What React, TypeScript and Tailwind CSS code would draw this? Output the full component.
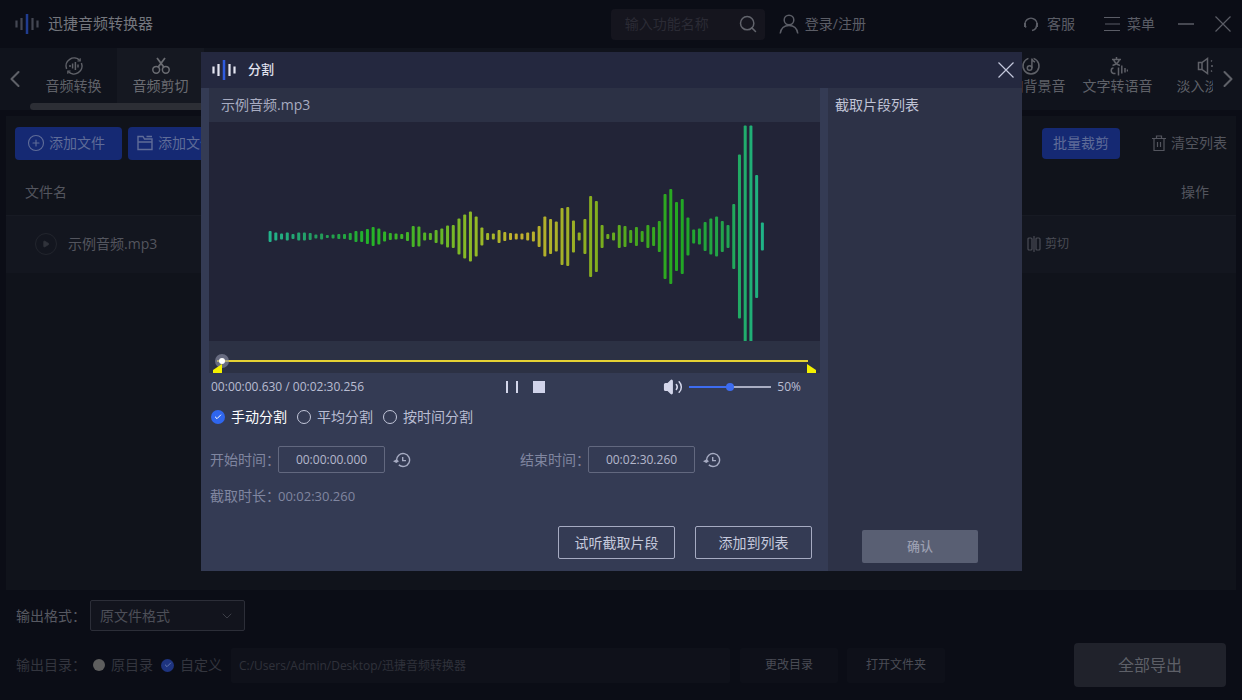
import React, { useState } from 'react';
import { Check, ChevronDown, ChevronLeft, ChevronRight, CirclePlus, Play, Search, Volume2 } from 'lucide-react';
import { clsx, type ClassValue } from 'clsx';
import { twMerge } from 'tailwind-merge';

function cn(...inputs: ClassValue[]) {
  return twMerge(clsx(inputs));
}

// Full heights of the waveform bars, left to right
const PEAKS = [
  11, 8, 6, 8, 5, 8, 8, 7, 4, 6, 3, 4, 5, 5, 7, 11, 11, 15, 19, 16, 10, 7, 6, 5, 9, 21, 20, 8, 7, 13, 16, 22, 23, 36, 44,
  50, 40, 18, 7, 6, 13, 9, 7, 6, 6, 8, 10, 21, 40, 35, 30, 57, 59, 32, 8, 35, 81, 71, 23, 5, 8, 23, 21, 13, 19, 11, 23,
  19, 31, 85, 95, 69, 75, 38, 14, 16, 29, 36, 40, 31, 23, 65, 164, 222, 222, 123, 28,
];

type IconName = 'convert' | 'cut' | 'music' | 'speech' | 'fade';

interface Tab {
  label: string;
  icon: IconName;
}

const TABS: Tab[] = [
  { label: '音频转换', icon: 'convert' },
  { label: '音频剪切', icon: 'cut' },
  { label: '音频合并', icon: 'convert' },
  { label: '音频提取', icon: 'music' },
  { label: '音频压缩', icon: 'convert' },
  { label: '音频变速', icon: 'fade' },
  { label: '音频变声', icon: 'speech' },
  { label: '音频降噪', icon: 'convert' },
  { label: '音频倒放', icon: 'convert' },
  { label: '音量调整', icon: 'fade' },
  { label: '音频录制', icon: 'music' },
  { label: '添加背景音', icon: 'music' },
  { label: '文字转语音', icon: 'speech' },
  { label: '淡入淡出', icon: 'fade' },
];

const ICON_PATHS: Record<IconName, React.ReactNode> = {
  convert: (
    <>
      <path d="M2.6 13A8 8 0 0 1 15.800 4.500M17.400 7A8 8 0 0 1 4.200 15.500" />
      <path d="M16.200 2.200v2.800h-2.800M3.800 17.800V15h2.800" strokeWidth="1.200" />
      <path d="M6 9v2M8.600 7.500v5M11.400 6v8M14 8.500v3" />
    </>
  ),
  cut: (
    <>
      <circle cx="5.200" cy="13.800" r="3.400" />
      <circle cx="14.800" cy="13.800" r="3.400" />
      <path d="M6 2l6.800 9M14 2l-6.800 9" strokeWidth="1.800" />
    </>
  ),
  music: (
    <>
      <path d="M12.6 2.400A8 8 0 1 1 7.400 2.400" />
      <circle cx="8.600" cy="12" r="2.300" />
      <path d="M10.900 12V2.500c.3 2 1.300 3 3.200 3.400" />
    </>
  ),
  speech: (
    <>
      <path d="M4 3.500h9M8.500 1v2.500M11.500 3.500C10.500 6.500 8 8.500 4.500 9.500M5.500 3.500C6.500 6.500 9 8.500 12 9.500" />
      <path d="M5.500 12c-3 0-3 5 0 5.500h2M10.500 11.500v8M13.800 9.500v8M17 12v4.500M19.500 13.500v2" />
    </>
  ),
  fade: (
    <>
      <path d="M12.500 2.500v15L7 13.500H3.500v-7H7z" />
      <path d="M7 6.500v7M16 4.500l1 .8M16 10h2.500M16 15.500l1-.8M19 7.500v1M19 12v1" />
    </>
  ),
};

const TabIcon: React.FC<{ name: IconName }> = ({ name }) => (
  <svg viewBox="0 0 20 20" className="w-5 h-5" fill="none" stroke="currentColor" strokeWidth="1.5">
    {ICON_PATHS[name]}
  </svg>
);

const CloseIcon = () => (
  <svg viewBox="0 0 16 16" className="w-4 h-4" stroke="currentColor" strokeWidth="1.200">
    <path d="M.5.5l15 15M15.500.5l-15 15" />
  </svg>
);

const Logo: React.FC<{ className?: string }> = ({ className }) => (
  <svg viewBox="0 0 26 22" className={cn('w-[26px] h-[22px]', className)} strokeWidth="2.200">
    <path d="M2.500 7.500v7M7.500 5v12M18.500 5v12M23.500 7.500v7" stroke="currentColor" />
    <path d="M13 1v20" stroke="#2f5ce0" strokeWidth="2.500" />
  </svg>
);

const ResetTimeButton: React.FC<{ label: string }> = ({ label }) => (
  <button type="button" aria-label={label} className="text-[#a6abc2]">
    <svg viewBox="0 0 18 16" className="w-[18px] h-4" fill="none" stroke="currentColor" strokeWidth="1.400">
      <path d="M3.600 8.500A6.500 6.500 0 1 1 5.800 12.900" />
      <path d="M0 9.200l3.600-2 2.400 2-2.600 1.800z" fill="currentColor" stroke="none" />
      <path d="M9.700 5v3.600h3.300" />
    </svg>
  </button>
);

const TimeField: React.FC<{ id: string; label: string; value: string }> = ({ id, label, value }) => (
  <div className="flex items-center w-[310px] shrink-0">
    <label htmlFor={id} className="w-[68px] text-sm whitespace-nowrap text-[#8086a0]">
      {label}
    </label>
    <input
      id={id}
      defaultValue={value}
      className="w-[107px] h-[27px] mr-2 text-center text-xs text-[#b4b8cc] bg-transparent border border-[#62687f] rounded-xs outline-none"
    />
    <ResetTimeButton label={`${label}重置`} />
  </div>
);

interface RadioProps {
  name: string;
  label: string;
  checked: boolean;
  onChange: () => void;
  className?: string;
  inputClass?: string;
  checkClass?: string;
}

const Radio: React.FC<RadioProps> = ({ name, label, checked, onChange, className, inputClass, checkClass }) => (
  <label className={cn('flex items-center gap-[6px] text-sm whitespace-nowrap', className)}>
    <span className="grid place-items-center">
      <input
        type="radio"
        name={name}
        checked={checked}
        onChange={onChange}
        className={cn('col-start-1 row-start-1 appearance-none rounded-full', inputClass)}
      />
      {checked && (
        <Check className={cn('col-start-1 row-start-1 w-2 h-2 pointer-events-none', checkClass)} strokeWidth={3} />
      )}
    </span>
    {label}
  </label>
);

const Waveform = () => (
  <svg viewBox="0 0 611 219" className="block w-full h-[219px] bg-[#222437]">
    <defs>
      <linearGradient id="wave" gradientUnits="userSpaceOnUse" x1="60" y1="0" x2="554" y2="0">
        <stop offset="0" stopColor="#22b48c" />
        <stop offset="0.1" stopColor="#239a5c" />
        <stop offset="0.2" stopColor="#22b428" />
        <stop offset="0.3" stopColor="#4ab426" />
        <stop offset="0.42" stopColor="#94ba26" />
        <stop offset="0.5" stopColor="#c4b02c" />
        <stop offset="0.58" stopColor="#acb02a" />
        <stop offset="0.66" stopColor="#84ae1e" />
        <stop offset="0.74" stopColor="#46a81e" />
        <stop offset="0.83" stopColor="#22a822" />
        <stop offset="0.92" stopColor="#22a44c" />
        <stop offset="1" stopColor="#1fb488" />
      </linearGradient>
    </defs>
    {PEAKS.map((h, i) => (
      <rect key={i} x={59.6 + i * 5.724} y={114.5 - h / 2} width="3" height={h} rx="1" fill="url(#wave)" />
    ))}
  </svg>
);

const TitleBar = () => (
  <header className="flex items-center h-12 pl-[14px] pr-[11px] text-sm text-[#5b5d66]">
    <Logo className="text-[#6a6e7c] opacity-60" />
    <h1 className="ml-2 text-[15px] text-[#74767d]">迅捷音频转换器</h1>
    <div className="flex items-center w-[154px] h-[31px] ml-auto pl-[14px] pr-[7px] rounded-sm bg-[#15151e]">
      <input
        aria-label="搜索功能"
        placeholder="输入功能名称"
        className="flex-1 min-w-0 bg-transparent outline-none placeholder:text-[#2b2b35]"
      />
      <button type="button" aria-label="搜索" className="text-[#62646c]">
        <Search className="w-5 h-5" strokeWidth={1.8} />
      </button>
    </div>
    <a href="#login" className="flex items-center gap-[6px] ml-[14px] mr-[157px]">
      <svg viewBox="0 0 20 20" className="w-5 h-5" fill="none" stroke="currentColor" strokeWidth="1.500">
        <circle cx="10" cy="6" r="4.800" />
        <path d="M1.200 19.500C2 14 5.500 11.500 10 11.500s8 2.500 8.800 8" />
      </svg>
      登录/注册
    </a>
    <a href="#support" className="flex items-center gap-2">
      <svg viewBox="0 0 16 16" className="w-4 h-4" fill="none" stroke="currentColor" strokeWidth="1.500">
        <path d="M3 11.500A6 6 0 1 1 13 11.500M13.500 9.500c0 3-2 4.500-4.500 5" />
        <path d="M2 7v4M14 7v4" strokeWidth="2" />
      </svg>
      客服
    </a>
    <button type="button" className="flex items-center gap-[7px] ml-[29px]">
      <svg viewBox="0 0 16 16" className="w-4 h-4" fill="none" stroke="currentColor" strokeWidth="1.200">
        <path d="M0 1.500h16M1 8h15M0 14.500h16" />
      </svg>
      菜单
    </button>
    <button type="button" aria-label="最小化" className="ml-[23px]">
      <svg viewBox="0 0 16 16" className="w-4 h-4" stroke="currentColor" strokeWidth="1.500">
        <path d="M0 8h16" />
      </svg>
    </button>
    <button type="button" aria-label="关闭" className="ml-[21px]">
      <CloseIcon />
    </button>
  </header>
);

const TabStrip = () => (
  <nav className="flex h-[62px] bg-[#10131c] text-[#5f6168]">
    <button type="button" aria-label="向左" className="flex justify-center items-center w-[30px] shrink-0">
      <ChevronLeft className="w-7 h-7" strokeWidth={1.8} />
    </button>
    <div className="flex-1 min-w-0">
      <div className="flex overflow-hidden">
        {TABS.map((tab, i) => (
          <button
            key={tab.label}
            type="button"
            className={cn(
              'flex flex-col items-center w-[87px] h-[55px] pt-2 shrink-0 text-sm leading-5 whitespace-nowrap',
              i === 1 && 'bg-[#151821] text-[#6a6c72]'
            )}
          >
            <TabIcon name={tab.icon} />
            {tab.label}
          </button>
        ))}
      </div>
      <div className="w-2/3 h-[7px] rounded-full bg-[#2c2e35]" />
    </div>
    <button type="button" aria-label="向右" className="flex justify-center items-center w-[29px] shrink-0">
      <ChevronRight className="w-7 h-7" strokeWidth={1.8} />
    </button>
  </nav>
);

const FilePanel = () => (
  <main className="flex-1 mx-[6px] mt-[6px] bg-[#10131b] text-sm text-[#53555e]">
    <div className="flex items-center gap-[6px] h-[54px] px-[9px]">
      <button type="button" className="flex items-center gap-1 w-[107px] h-[33px] pl-3 rounded-sm bg-[#152973] text-[#5f6c98]">
        <CirclePlus className="w-[18px] h-[18px]" strokeWidth={1.5} />
        添加文件
      </button>
      <button type="button" className="flex items-center gap-1 w-[121px] h-[33px] pl-2 rounded-sm bg-[#152973] text-[#5f6c98]">
        <svg viewBox="0 0 18 18" className="w-[18px] h-[18px]" fill="none" stroke="currentColor" strokeWidth="1.400">
          <path d="M2 15.500v-13h5l1.500 2.500h7.500v10.500zM2 8h14M10.500 2.500H16" />
        </svg>
        添加文件夹
      </button>
      <button type="button" className="w-[78px] h-[31px] ml-auto rounded-sm bg-[#152973] text-[#5f6c98]">
        批量裁剪
      </button>
      <button type="button" className="flex items-center gap-1 ml-[25px]">
        <svg viewBox="0 0 16 16" className="w-4 h-4" fill="none" stroke="currentColor" strokeWidth="1.200">
          <path d="M1 3.500h14M5.500 3V1h5v2M3 3.500v12h10v-12M6.500 7v5M9.500 7v5" />
        </svg>
        清空列表
      </button>
    </div>
    <table className="w-full text-left">
      <thead>
        <tr className="h-[45px]">
          <th className="pl-[19px] font-normal">文件名</th>
          <th className="w-[154px]" />
          <th className="w-[55px] font-normal">操作</th>
        </tr>
      </thead>
      <tbody>
        <tr className="h-[58px] border-t border-[#171a23] bg-[#13161f]">
          <td className="pl-[29px]">
            <div className="flex items-center gap-[11px]">
              <button
                type="button"
                aria-label="播放"
                className="flex justify-center items-center w-[22px] h-[22px] rounded-full border border-[#22252d] text-[#30333b]"
              >
                <Play className="w-2 h-2 fill-current" />
              </button>
              示例音频.mp3
            </div>
          </td>
          <td>
            <button type="button" className="flex items-center gap-1 text-xs text-[#4a4c55]">
              <svg viewBox="0 0 14 16" className="w-[14px] h-4" fill="none" stroke="currentColor" strokeWidth="1.200">
                <rect x="1" y="2" width="4" height="12" rx="1" />
                <rect x="9" y="2" width="4" height="12" rx="1" />
                <path d="M7 0v16" />
              </svg>
              剪切
            </button>
          </td>
          <td />
        </tr>
      </tbody>
    </table>
  </main>
);

const OutputBar = () => {
  const [target, setTarget] = useState('custom');

  return (
    <footer className="pt-[10px] pb-[13px] pl-4 pr-4 text-sm text-[#484a53]">
      <div className="flex items-center">
        <label htmlFor="format" className="w-[74px] whitespace-nowrap text-[#575962]">
          输出格式：
        </label>
        <div className="relative">
          <select
            id="format"
            className="appearance-none w-[155px] h-[31px] pl-[9px] pr-8 rounded-xs border border-[#2c2e38] bg-[#12141d] text-[#4d4f58] outline-none"
          >
            <option>原文件格式</option>
          </select>
          <ChevronDown className="absolute right-[10px] top-2 w-4 h-4 pointer-events-none text-[#3c3e47]" strokeWidth={1.5} />
        </div>
      </div>
      <div className="flex items-center h-11 mt-3 text-[#33353e]">
        <span className="w-[77px] whitespace-nowrap">输出目录：</span>
        <Radio
          name="target"
          label="原目录"
          checked={target === 'source'}
          onChange={() => setTarget('source')}
          className="mr-2"
          inputClass="w-3 h-3 bg-[#5e5e5e]"
        />
        <Radio
          name="target"
          label="自定义"
          checked={target === 'custom'}
          onChange={() => setTarget('custom')}
          inputClass="w-[13px] h-[13px] bg-[#5e5e5e] checked:bg-[#1e3480]"
          checkClass="text-[#6478b0]"
        />
        <input
          aria-label="输出路径"
          defaultValue="C:/Users/Admin/Desktop/迅捷音频转换器"
          className="flex-1 min-w-0 h-[35px] ml-[9px] px-2 rounded-xs bg-[#0f111a] text-xs text-[#2f313a] outline-none"
        />
        <button type="button" className="w-[98px] h-[35px] ml-[10px] rounded-xs bg-[#0e1019] text-xs text-[#4a4c55]">
          更改目录
        </button>
        <button type="button" className="w-[98px] h-[35px] ml-[9px] rounded-xs bg-[#0e1019] text-xs text-[#4a4c55]">
          打开文件夹
        </button>
        <button type="button" className="w-[152px] h-11 ml-[129px] rounded-sm bg-[#20222b] text-base text-[#5e6068]">
          全部导出
        </button>
      </div>
    </footer>
  );
};

const MODES = ['手动分割', '平均分割', '按时间分割'];

const SplitDialog = () => {
  const [mode, setMode] = useState(MODES[0]);
  const [volume, setVolume] = useState(50);
  const [position, setPosition] = useState(0.63);

  return (
    <div role="dialog" aria-label="分割" className="w-[821px] bg-[#343b54] text-[#b9bdd2]">
      <div className="flex items-center h-9 pl-[10px] pr-2 bg-[#24283f]">
        <Logo className="text-[#e4e6f2]" />
        <h2 className="ml-[11px] text-[13px] font-medium text-[#e0e2ee]">分割</h2>
        <button type="button" aria-label="关闭" className="ml-auto text-[#c4c8dc]">
          <CloseIcon />
        </button>
      </div>

      <div className="flex">
        <div className="flex-1 min-w-0 px-2">
          <div className="h-[34px] px-3 text-sm leading-[34px] bg-[#2c3145] text-[#a7abc0]">示例音频.mp3</div>
          <Waveform />

          {/* Playback position with the two trim handles */}
          <div className="relative flex items-start h-8 pt-[14px] pl-2 pr-3 bg-[#2c3144]">
            <input
              type="range"
              aria-label="播放进度"
              min={0}
              max={150.26}
              step={0.01}
              value={position}
              onChange={(e) => setPosition(Number(e.target.value))}
              className="w-full h-3 appearance-none bg-transparent [&::-webkit-slider-runnable-track]:h-[2px] [&::-webkit-slider-runnable-track]:bg-[#e6d234] [&::-webkit-slider-thumb]:appearance-none [&::-webkit-slider-thumb]:w-[6px] [&::-webkit-slider-thumb]:h-[6px] [&::-webkit-slider-thumb]:-mt-[2px] [&::-webkit-slider-thumb]:rounded-full [&::-webkit-slider-thumb]:bg-white [&::-webkit-slider-thumb]:ring-4 [&::-webkit-slider-thumb]:ring-[#8f93a8]/60"
            />
            <svg viewBox="0 0 9 9" className="absolute left-1 bottom-0 w-[9px] h-[9px]" fill="#f4f000">
              <path d="M9 0v9H0V6z" />
            </svg>
            <svg viewBox="0 0 9 9" className="absolute right-1 bottom-0 w-[9px] h-[9px]" fill="#f4f000">
              <path d="M0 0v9h9V6z" />
            </svg>
          </div>

          <div className="flex items-center h-7 pl-[2px] pr-[19px] text-xs">
            <span className="w-[295px]">00:00:00.630 / 00:02:30.256</span>
            <button type="button" aria-label="暂停">
              <svg viewBox="0 0 12 12" className="w-3 h-3" stroke="#d3d6ea" strokeWidth="2">
                <path d="M1 0v12M11 0v12" />
              </svg>
            </button>
            <button type="button" aria-label="停止" className="w-3 h-3 ml-[15px] bg-[#d0d3ea]" />
            <Volume2 className="w-5 h-5 ml-auto text-[#d3d6ea] [&>path:first-child]:fill-current" strokeWidth={1.8} />
            <input
              type="range"
              aria-label="音量"
              value={volume}
              onChange={(e) => setVolume(Number(e.target.value))}
              style={{ backgroundImage: `linear-gradient(to right, #3d6cf0 ${volume}%, #a9adc2 ${volume}%)` }}
              className="w-[82px] h-[2px] mx-[6px] appearance-none [&::-webkit-slider-thumb]:appearance-none [&::-webkit-slider-thumb]:w-2 [&::-webkit-slider-thumb]:h-2 [&::-webkit-slider-thumb]:rounded-full [&::-webkit-slider-thumb]:bg-[#3d6cf0]"
            />
            <span>{volume}%</span>
          </div>

          <div className="flex items-center gap-[10px] h-8 pl-[2px]">
            {MODES.map((m) => (
              <Radio
                key={m}
                name="mode"
                label={m}
                checked={mode === m}
                onChange={() => setMode(m)}
                className={cn(mode === m && 'text-white')}
                inputClass="w-[14px] h-[14px] border border-[#c3c7da] checked:border-0 checked:bg-[#2f66ee]"
              />
            ))}
          </div>

          <div className="flex h-[27px] mt-[13px] pl-px">
            <TimeField id="start" label="开始时间：" value="00:00:00.000" />
            <TimeField id="end" label="结束时间：" value="00:02:30.260" />
          </div>
          <div className="flex items-center h-5 mt-[13px] pl-px text-sm text-[#8086a0]">
            <span className="w-[68px] whitespace-nowrap">截取时长：</span>
            <span className="text-[13px]">00:02:30.260</span>
          </div>

          <div className="flex justify-end gap-5 mt-5 pr-2 pb-3 text-sm text-[#c6cadd]">
            <button type="button" className="w-[117px] h-[33px] rounded-xs border border-[#a6abc2]">
              试听截取片段
            </button>
            <button type="button" className="w-[117px] h-[33px] rounded-xs border border-[#a6abc2]">
              添加到列表
            </button>
          </div>
        </div>

        <aside className="flex flex-col w-[194px] shrink-0 pb-2 bg-[#2d3247]">
          <h3 className="px-[7px] text-sm leading-[34px] text-[#c0c4d6]">截取片段列表</h3>
          <button type="button" className="w-[116px] h-[33px] mt-auto ml-[34px] rounded-xs bg-[#595f73] text-[13px] font-medium text-[#9a9eb0]">
            确认
          </button>
        </aside>
      </div>
    </div>
  );
};

export default function App() {
  return (
    <div className="flex flex-col min-h-screen bg-[#0b0d16] font-['Open_Sans','Noto_Sans_CJK_SC',sans-serif]">
      <TitleBar />
      <TabStrip />
      <FilePanel />
      <OutputBar />
      <div className="fixed inset-0 flex justify-center items-start pt-[52px] pr-[19px]">
        <SplitDialog />
      </div>
    </div>
  );
}
